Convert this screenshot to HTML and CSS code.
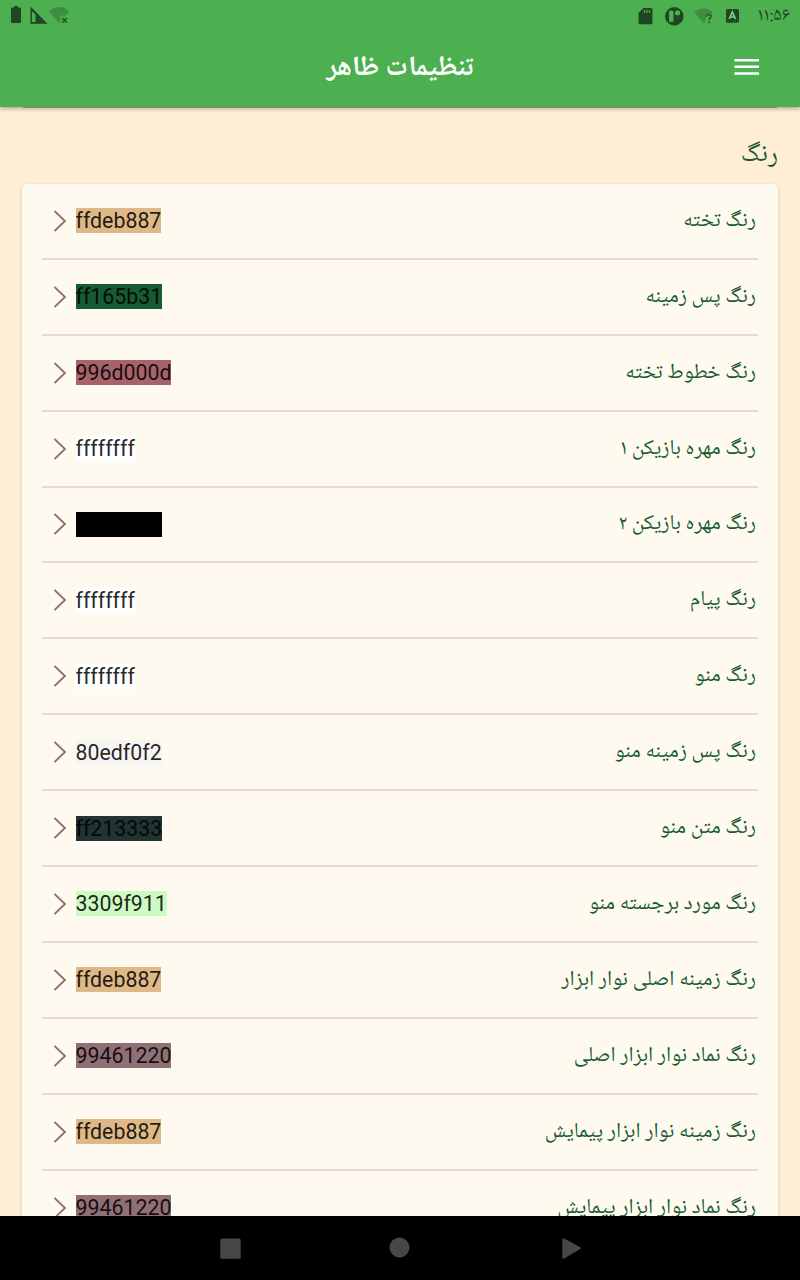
FILE: index.html
```html
<!DOCTYPE html>
<html lang="fa" dir="rtl">
<head>
<meta charset="utf-8">
<title>تنظیمات ظاهر</title>
<link rel="stylesheet" href="styles.css">
</head>
<body>
<div class="screen">
<header class="appbar">
  <div class="status" dir="ltr">
    <svg class="status-icons" width="80" height="30" viewBox="0 0 80 30">
      <path class="ink" d="M14 6h4v1.500h2q1 0 1 1V22q0 1-1 1h-8q-1 0-1-1V8.500q0-1 1-1h2z"/>
      <path class="ink" fill-rule="evenodd" d="M30.500 6.500L47.500 23.700H30.500zM32 11v11h3.500v-7.500z"/>
      <path class="faint" d="M49 11Q59 3 69 11L65.500 15.500H60.500V22L59 23z"/>
      <path class="cross" d="M62.200 18l4.600 4.600M66.800 18l-4.600 4.600"/>
    </svg>
    <div class="status-end">
      <svg class="status-icons" width="110" height="30" viewBox="632 0 110 30">
        <path class="ink" d="M643.500 8H651q1.500 0 1.500 1.500v13q0 1.800-1.500 1.800h-11q-1.500 0-1.500-1.800V13z"/>
        <path class="cut" d="M644.500 10v3M647 10v3M649.500 10v3"/>
        <circle class="ink" cx="674.300" cy="16.300" r="9.200"/>
        <rect class="hole" x="669" y="10.500" width="4.500" height="11.500" rx="1.500"/>
        <rect class="hole" x="675" y="10.500" width="5" height="4.800" rx="1.500"/>
        <path class="faint" d="M694 12Q704 5 713 12L711.500 14Q706 14 706 19L704 23.500z"/>
        <path class="question" d="M706.800 16.500Q707 14.500 709 14.500T711 16.500Q711 17.700 709.300 19V20.300M709.300 21.500V23.300"/>
        <rect class="ink" x="726" y="9" width="13" height="13.700" rx="1.500"/>
        <path class="letter" d="M729.300 19L732.300 12L735.500 19M730.500 17h4"/>
        <path class="dots" d="M733 20.700h1v1h-1zM735 20.700h1v1h-1zM737 20.700h1v1h-1z"/>
      </svg>
      <span class="clock">۱۱:۵۶</span>
    </div>
  </div>
  <div class="toolbar">
    <svg class="menu" width="26" height="18" viewBox="0 0 26 18"><path d="M.5 2.200h24.500M.5 8.800h24.500M.5 15.500h24.500"/></svg>
    <h1 class="title">تنظیمات ظاهر</h1>
  </div>
</header>
<main class="content">
  <div class="previous-edge"></div>
  <h2 class="section"><span>رنگ</span></h2>
  <ul class="card">
    <li class="row"><span class="label">رنگ تخته</span><span class="value burly">ffdeb887</span><svg class="chevron" viewBox="0 0 14 24"><path d="M1.500 2L12 12L1.500 22"/></svg></li>
    <li class="row"><span class="label">رنگ پس زمینه</span><span class="value green">ff165b31</span><svg class="chevron" viewBox="0 0 14 24"><path d="M1.500 2L12 12L1.500 22"/></svg></li>
    <li class="row"><span class="label">رنگ خطوط تخته</span><span class="value rose">996d000d</span><svg class="chevron" viewBox="0 0 14 24"><path d="M1.500 2L12 12L1.500 22"/></svg></li>
    <li class="row"><span class="label">رنگ مهره بازیکن ۱</span><span class="value white">ffffffff</span><svg class="chevron" viewBox="0 0 14 24"><path d="M1.500 2L12 12L1.500 22"/></svg></li>
    <li class="row"><span class="label">رنگ مهره بازیکن ۲</span><span class="value black">ff000000</span><svg class="chevron" viewBox="0 0 14 24"><path d="M1.500 2L12 12L1.500 22"/></svg></li>
    <li class="row"><span class="label">رنگ پیام</span><span class="value white">ffffffff</span><svg class="chevron" viewBox="0 0 14 24"><path d="M1.500 2L12 12L1.500 22"/></svg></li>
    <li class="row"><span class="label">رنگ منو</span><span class="value white">ffffffff</span><svg class="chevron" viewBox="0 0 14 24"><path d="M1.500 2L12 12L1.500 22"/></svg></li>
    <li class="row"><span class="label">رنگ پس زمینه منو</span><span class="value mist">80edf0f2</span><svg class="chevron" viewBox="0 0 14 24"><path d="M1.500 2L12 12L1.500 22"/></svg></li>
    <li class="row"><span class="label">رنگ متن منو</span><span class="value slate">ff213333</span><svg class="chevron" viewBox="0 0 14 24"><path d="M1.500 2L12 12L1.500 22"/></svg></li>
    <li class="row"><span class="label">رنگ مورد برجسته منو</span><span class="value lime">3309f911</span><svg class="chevron" viewBox="0 0 14 24"><path d="M1.500 2L12 12L1.500 22"/></svg></li>
    <li class="row"><span class="label">رنگ زمینه اصلی نوار ابزار</span><span class="value burly">ffdeb887</span><svg class="chevron" viewBox="0 0 14 24"><path d="M1.500 2L12 12L1.500 22"/></svg></li>
    <li class="row"><span class="label">رنگ نماد نوار ابزار اصلی</span><span class="value plum">99461220</span><svg class="chevron" viewBox="0 0 14 24"><path d="M1.500 2L12 12L1.500 22"/></svg></li>
    <li class="row"><span class="label">رنگ زمینه نوار ابزار پیمایش</span><span class="value burly">ffdeb887</span><svg class="chevron" viewBox="0 0 14 24"><path d="M1.500 2L12 12L1.500 22"/></svg></li>
    <li class="row"><span class="label">رنگ نماد نوار ابزار پیمایش</span><span class="value plum">99461220</span><svg class="chevron" viewBox="0 0 14 24"><path d="M1.500 2L12 12L1.500 22"/></svg></li>
  </ul>
</main>
<nav class="navbar">
  <svg width="800" height="64" viewBox="0 0 800 64">
    <rect x="220.300" y="22.500" width="20.400" height="20.300" rx="1.500"/>
    <circle cx="399.500" cy="31.500" r="10"/>
    <path d="M562.300 23.500q0-2 1.800-1L580.300 31.300q1.200.9 0 1.800L564 42.500q-1.700.8-1.700-1z"/>
  </svg>
</nav>
</div>
</body>
</html>
```
FILE: styles.css
```css
* { box-sizing: border-box; margin: 0; padding: 0; }
body { font-family: "Noto Naskh Arabic UI", "Noto Naskh Arabic", "DejaVu Sans", Roboto, sans-serif; background: #ffedd5; }
.screen { width: 800px; height: 1280px; display: flex; flex-direction: column; overflow: hidden; }
.appbar { height: 106.600px; flex: none; background: #4caf50; box-shadow: 0 1px 5px rgba(0,0,0,.38); position: relative; z-index: 1; }
.status { height: 32px; display: flex; justify-content: space-between; }
.status-end { display: flex; }
.status-icons { display: block; }
.ink { fill: #1f4620; }
.faint { fill: #3e8e41; }
.hole { fill: #4caf50; }
.dots { fill: #3a7d3d; }
.cross, .question, .cut, .letter { fill: none; stroke-width: 1.7; }
.cross, .question { stroke: #27592a; }
.cut { stroke: #4caf50; stroke-width: 1.2; }
.letter { stroke: #7ed482; }
.clock { width: 58px; padding-right: 10px; text-align: right; font-size: 18.667px; line-height: 32px; color: #1f4620; white-space: nowrap; }
.toolbar { height: 75px; padding: 0 40px 5px; display: grid; grid-template-columns: 26px 1fr 26px; align-items: center; }
.menu { fill: none; stroke: #fff; stroke-width: 2.4; }
.title { padding-top: 2px; text-align: center; font-size: 28px; line-height: 40px; font-weight: 700; color: #fff; }
.content { flex: 1; min-height: 0; overflow: hidden; padding: 0 22px; }
.previous-edge { height: 1.400px; margin: 0 1px; background: #b1ab90; }
.section { height: 76px; padding-top: 28px; font-size: 26px; line-height: 38px; font-weight: 400; color: #165b31; }
.card { list-style: none; padding: 0 20px; background: #fffaf0; border-radius: 5px; box-shadow: 0 1px 3px rgba(0,0,0,.24); }
.row { height: 75.900px; display: flex; align-items: center; padding: 0 2px 0 10.500px; border-bottom: 2px solid #ecd8d3; }
.label { color: #165b31; font-size: 21.333px; line-height: 30px; margin-left: auto; white-space: nowrap; }
.value { font-family: Roboto, sans-serif; font-size: 21.333px; line-height: 25px; color: rgba(0,0,0,.87); direction: ltr; }
.chevron { width: 14px; height: 24px; margin-right: 9px; fill: none; stroke: #91716e; stroke-width: 1.800; }
.burly { background: #deb887; }
.green { background: #165b31; }
.rose { background: #a7636a; }
.white { background: #fff; }
.black { background: #000; }
.mist { background: #f6f5f3; }
.slate { background: #213333; }
.lime { background: #cefac3; }
.plum { background: #906f75; }
.navbar { height: 64px; flex: none; background: #000; direction: ltr; fill: #474747; }
.navbar svg { display: block; }
```
